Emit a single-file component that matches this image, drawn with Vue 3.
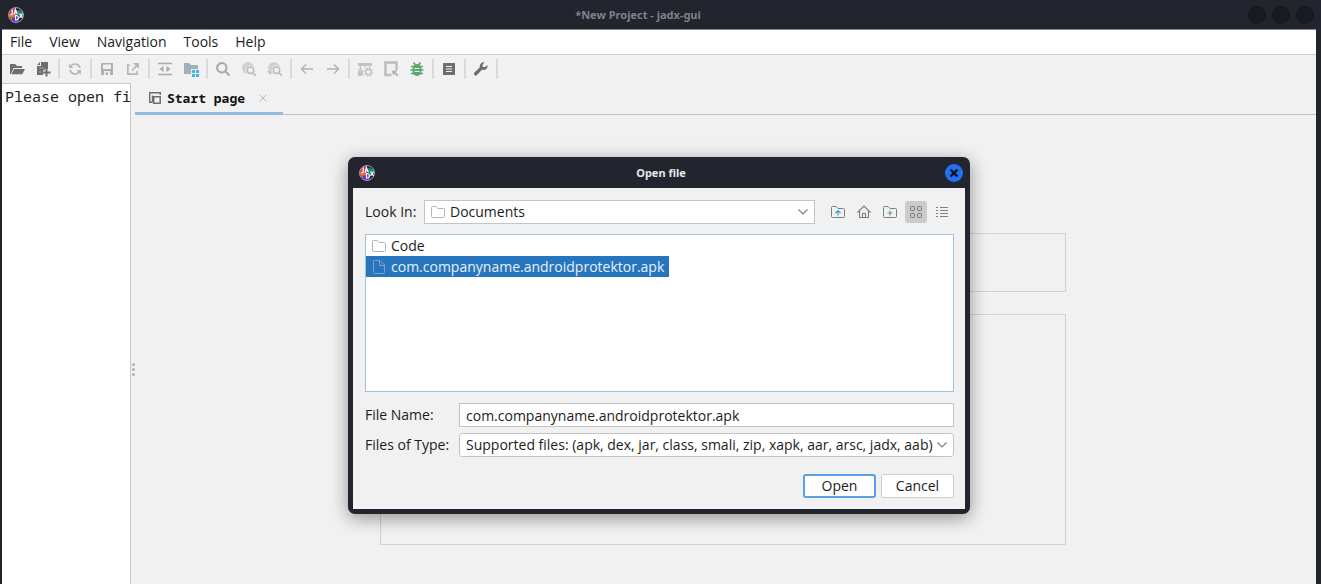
<script setup>
import { ref } from 'vue'

const menus = ['File', 'View', 'Navigation', 'Tools', 'Help']

const toolGroups = [
  [
    { id: 'open', label: 'Open file' },
    { id: 'add', label: 'Add files' },
  ],
  [{ id: 'reload', label: 'Reload files' }],
  [
    { id: 'save', label: 'Save all' },
    { id: 'export', label: 'Export project' },
  ],
  [
    { id: 'sync', label: 'Sync with editor' },
    { id: 'flat', label: 'Flatten packages' },
  ],
  [
    { id: 'search', label: 'Text search' },
    { id: 'find', label: 'Class search' },
    { id: 'find2', label: 'Comment search' },
  ],
  [
    { id: 'back', label: 'Back' },
    { id: 'forward', label: 'Forward' },
  ],
  [
    { id: 'deobf', label: 'Deobfuscation' },
    { id: 'quark', label: 'Quark engine' },
    { id: 'bug', label: 'Debugger' },
  ],
  [{ id: 'log', label: 'Log viewer' }],
  [{ id: 'prefs', label: 'Preferences' }],
]

const fileName = ref('com.companyname.androidprotektor.apk')
</script>

<template>
  <div class="window">
    <svg class="defs" width="0" height="0" aria-hidden="true">
      <defs>
        <clipPath id="logo-clip"><circle cx="8" cy="8" r="7.4" /></clipPath>
        <symbol id="logo" viewBox="0 0 16 16">
          <g clip-path="url(#logo-clip)">
            <rect width="16" height="16" fill="#2b2530" />
            <path d="M0 0h8v8H0z" fill="#c2386b" />
            <path d="M8 3l8 1v7l-5-1z" fill="#178a80" />
            <path d="M0 8l8-1 1 4-4 4z" fill="#ee6a32" />
            <path d="M4 11l5-2 3 7H4z" fill="#5b35cf" />
            <path d="M4.200 2.500v4q0 1.500-2 1M6 7.500l1.400-5 2 5M6.500 6h2.500" class="mark" />
            <path d="M7.500 8.500v4.500h1q1.800 0 1.800-2.200t-1.800-2.300zM11.500 6.500l3 4.500M14.500 6.500l-3 4.500" class="mark" />
          </g>
          <circle cx="8" cy="8" r="7.5" fill="none" stroke="#b9b9bd" stroke-width="0.8" />
        </symbol>
      </defs>
    </svg>

    <header class="titlebar">
      <svg class="logo" aria-hidden="true"><use href="#logo" /></svg>
      <h1>*New Project - jadx-gui</h1>
      <div class="winbtns">
        <button aria-label="Minimize"></button>
        <button aria-label="Maximize"></button>
        <button aria-label="Close"></button>
      </div>
    </header>

    <div class="frame">
      <nav class="menubar">
        <button v-for="m in menus" :key="m">{{ m }}</button>
      </nav>

      <div class="toolbar" role="toolbar">
        <div v-for="(group, i) in toolGroups" :key="i" class="group">
          <button v-for="t in group" :key="t.id" :aria-label="t.label">
            <svg width="16" height="16" viewBox="0 0 16 16" fill="none" aria-hidden="true">
              <path v-if="t.id === 'open'" d="M1 13V3h5l2 2h5v2H4.500L2 13zM2.500 13.200L5 8h11l-2.700 5.200z" fill="#6e6e6e" />
              <template v-else-if="t.id === 'add'">
                <path d="M6 1h7v8h-3v2H8v3H2V5h4z" fill="#6e6e6e" />
                <path d="M2 4l3-3v3z" fill="#6e6e6e" />
                <path d="M4 7h5M4 11h3" stroke="#a5a5a5" />
                <path d="M11.500 8v7M8 11.500h7" stroke="#f1f1f1" stroke-width="4" />
                <path d="M11.500 8v7.500M7.500 11.500h8" stroke="#6e6e6e" stroke-width="2" />
              </template>
              <g v-else-if="t.id === 'reload'" stroke="#b7b7b7" stroke-width="1.700">
                <path d="M13 7A5.200 5.200 0 0 0 3.500 5.500M3 9a5.200 5.200 0 0 0 9.500 1.500" />
                <path d="M2 2.500V7h4.500zM14 13.500V9H9.500z" fill="#b7b7b7" stroke="none" />
              </g>
              <path v-else-if="t.id === 'save'" fill-rule="evenodd" d="M2 2h12v12H2zM4 3.500V8h8V3.500zM5 10v4h1.500v-2.500H9V14h2v-4z" fill="#b0b0b0" />
              <g v-else-if="t.id === 'export'" stroke="#b7b7b7" stroke-width="1.700">
                <path d="M5 4H2.800v9.200H12V10M7 9.500l5-5" />
                <path d="M8 2h6v6z" fill="#b7b7b7" stroke="none" />
              </g>
              <template v-else-if="t.id === 'sync'">
                <path d="M1 2.500h14M1 13.500h14" stroke="#aaa" stroke-width="1.600" />
                <path d="M6.500 5v6L2.500 8zM9.500 5v6l4-3z" fill="#aaa" />
              </template>
              <template v-else-if="t.id === 'flat'">
                <path d="M1 2h5l2 2h7v4H8v5H1z" fill="#a4b0b9" />
                <path d="M9 9h3v3H9zM13 9h3v3h-3zM9 13h3v3H9zM13 13h3v3h-3z" fill="#3fb4e8" />
              </template>
              <path v-else-if="t.id === 'search'" d="M10.400 10.400L14.500 14.500M11.500 6.800a4.700 4.700 0 1 1-9.400 0a4.700 4.700 0 0 1 9.400 0z" stroke="#a6a6a6" stroke-width="2" />
              <template v-else-if="t.id === 'find' || t.id === 'find2'">
                <circle cx="7" cy="7" r="6" fill="#d1d1d1" />
                <circle cx="9.500" cy="9.300" r="4.800" fill="#f1f1f1" />
                <circle cx="9.500" cy="9.300" r="3.200" stroke="#bcbcbc" stroke-width="1.500" />
                <path d="M11.800 11.600L15 14.800" stroke="#bcbcbc" stroke-width="1.600" />
                <path v-if="t.id === 'find2'" d="M1 10A6 6 0 0 0 4 13" stroke="#bcbcbc" stroke-width="1.500" />
              </template>
              <path v-else-if="t.id === 'back'" d="M14 8H3M7 3.500L2.500 8 7 12.500" stroke="#b4b4b4" stroke-width="1.500" />
              <path v-else-if="t.id === 'forward'" d="M2 8h11M9 3.500L13.500 8 9 12.500" stroke="#b4b4b4" stroke-width="1.500" />
              <template v-else-if="t.id === 'deobf'">
                <path d="M1 2h14v3H1z" fill="#c3c3c3" />
                <path d="M3.500 5v4M8 5v2M12.500 5v2" stroke="#c3c3c3" />
                <path d="M1 9.500h5V15H1z" fill="#c3c3c3" />
                <path d="M2 10V8.500a1.500 1.500 0 0 1 3 0V10" stroke="#c3c3c3" />
                <circle cx="11.500" cy="11" r="4" stroke="#c3c3c3" stroke-width="1.500" stroke-dasharray="1.600 1.541" />
                <circle cx="11.500" cy="11" r="2.700" stroke="#c3c3c3" stroke-width="1.500" />
              </template>
              <template v-else-if="t.id === 'quark'">
                <path d="M8.500 14H2.500V1.500h11v8" stroke="#bcbcbc" stroke-width="2.400" />
                <path d="M8.500 9.500h6l-1.700 1.700 2.700 3-1.300 1.300-2.800-2.800-1.200 1.500z" fill="#b4b4b4" />
              </template>
              <template v-else-if="t.id === 'bug'">
                <path d="M4.500 1.500L6.500 4M11.500 1.500L9.500 4M2 5.500h12M1.500 9h13M2 12.500h12" stroke="#59a869" stroke-width="1.700" />
                <ellipse cx="8" cy="9" rx="4.600" ry="6" fill="#59a869" />
                <path d="M5.500 7.500h5M5.500 10.500h5" stroke="#f1f1f1" stroke-width="1.200" />
              </template>
              <template v-else-if="t.id === 'log'">
                <path d="M2 2h12v12H2z" fill="#6e6e6e" />
                <path d="M5 5.500h6M5 8h6M5 10.500h6" stroke="#f1f1f1" />
              </template>
              <path v-else d="M14.600 4.300A4 4 0 0 1 9.200 8.600L4 14a1.700 1.700 0 0 1-2.500-2.500L6.900 6.200A4 4 0 0 1 11.700 1.300L9.600 3.500v2.400H12z" fill="#6e6e6e" />
            </svg>
          </button>
        </div>
      </div>

      <div class="split">
        <aside class="tree">Please open fi</aside>
        <div class="divider" aria-hidden="true"><i></i><i></i><i></i></div>
        <main>
          <div class="tabs">
            <div class="tab">
              <svg width="12" height="12" viewBox="0 0 12 12" fill="none" aria-hidden="true">
                <path d="M3 10.300H.7V.7h10.600V3M3.500 10.500v-7" stroke="#6e6e6e" stroke-width="1.400" />
                <path d="M4.700 4.700h6.500v6.500H4.700z" stroke="#6e6e6e" stroke-width="1.500" />
              </svg>
              <span>Start page</span>
              <button aria-label="Close tab">
                <svg width="8" height="8" viewBox="0 0 8 8" aria-hidden="true"><path d="M.5.5l7 7M7.500.5l-7 7" stroke="#bcbcbc" /></svg>
              </button>
            </div>
          </div>
          <div class="start">
            <section class="box actions"></section>
            <section class="box recent"></section>
          </div>
        </main>
      </div>
    </div>

    <div class="dialog" role="dialog" aria-labelledby="dialog-title">
      <div class="dialog-title">
        <svg class="logo" aria-hidden="true"><use href="#logo" /></svg>
        <h2 id="dialog-title">Open file</h2>
        <button class="close" aria-label="Close dialog">
          <svg width="10" height="10" viewBox="0 0 10 10" aria-hidden="true"><path d="M1.500 1.500l7 7M8.500 1.500l-7 7" stroke="#101218" stroke-width="2.400" /></svg>
        </button>
      </div>
      <form class="dialog-body" @submit.prevent>
        <div class="look">
          <label for="look">Look In:</label>
          <div class="combo square">
            <svg class="lead" width="16" height="16" viewBox="0 0 16 16" fill="none" aria-hidden="true">
              <path d="M1.500 12.500v-9q0-1 1-1H6l2 2h5.500q1 0 1 1v7q0 1-1 1h-11q-1 0-1-1z" stroke="#adb5bd" />
            </svg>
            <select id="look" class="with-icon"><option>Documents</option></select>
            <svg class="arrow" width="10" height="6" viewBox="0 0 10 6" fill="none" aria-hidden="true"><path d="M.5.5L5 5 9.500.5" stroke="#7d7d7d" stroke-width="1.200" /></svg>
          </div>
          <div class="views">
            <button type="button" aria-label="Up one level">
              <svg width="16" height="16" viewBox="0 0 16 16" fill="none" aria-hidden="true">
                <path d="M1.500 12.500v-9q0-1 1-1H6l2 2h5.500q1 0 1 1v7q0 1-1 1h-11q-1 0-1-1z" stroke="#7d7d7d" />
                <path d="M8 11.500V6.500M5.500 9L8 6.500 10.500 9" stroke="#389fd6" stroke-width="1.200" />
              </svg>
            </button>
            <button type="button" aria-label="Home">
              <svg width="16" height="16" viewBox="0 0 16 16" fill="none" aria-hidden="true">
                <path d="M1.500 8.500L8 2l6.500 6.500M3.500 7v6.500h9V7M6.500 13.500v-4h3v4" stroke="#7d7d7d" stroke-width="1.100" />
              </svg>
            </button>
            <button type="button" aria-label="New folder">
              <svg width="16" height="16" viewBox="0 0 16 16" fill="none" aria-hidden="true">
                <path d="M1.500 12.500v-9q0-1 1-1H6l2 2h5.500q1 0 1 1v7q0 1-1 1h-11q-1 0-1-1z" stroke="#7d7d7d" />
                <path d="M8 6.500v5M5.500 9h5" stroke="#59a869" stroke-width="1.200" />
              </svg>
            </button>
            <button type="button" class="on" aria-label="List" aria-pressed="true">
              <svg width="16" height="16" viewBox="0 0 16 16" fill="none" stroke="#6e6e6e" aria-hidden="true">
                <rect x="2.500" y="2.500" width="4" height="4" rx="1" /><rect x="9.500" y="2.500" width="4" height="4" rx="1" />
                <rect x="2.500" y="9.500" width="4" height="4" rx="1" /><rect x="9.500" y="9.500" width="4" height="4" rx="1" />
              </svg>
            </button>
            <button type="button" aria-label="Details">
              <svg width="16" height="16" viewBox="0 0 16 16" fill="none" aria-hidden="true">
                <path d="M2 3.500h2M2 6.500h2M2 9.500h2M2 12.500h2M6 3.500h8M6 6.500h8M6 9.500h8M6 12.500h8" stroke="#808080" />
              </svg>
            </button>
          </div>
        </div>

        <ul class="files">
          <li>
            <svg width="16" height="16" viewBox="0 0 16 16" fill="none" aria-hidden="true">
              <path d="M1.500 12.500v-9q0-1 1-1H6l2 2h5.500q1 0 1 1v7q0 1-1 1h-11q-1 0-1-1z" stroke="#adb5bd" />
            </svg>Code
          </li>
          <li class="selected">
            <svg width="16" height="16" viewBox="0 0 16 16" fill="none" aria-hidden="true">
              <path d="M2.500 13.500v-11q0-1 1-1H9l4.500 4.500v7.500q0 1-1 1h-9q-1 0-1-1zM8.500 1.500v5h5" stroke="#8a9fb3" />
            </svg>com.companyname.androidprotektor.apk
          </li>
        </ul>

        <div class="field">
          <label for="name">File Name:</label>
          <input id="name" v-model="fileName" type="text" />
        </div>
        <div class="field">
          <label for="type">Files of Type:</label>
          <div class="combo">
            <select id="type"><option>Supported files: (apk, dex, jar, class, smali, zip, xapk, aar, arsc, jadx, aab)</option></select>
            <svg class="arrow" width="10" height="6" viewBox="0 0 10 6" fill="none" aria-hidden="true"><path d="M.5.5L5 5 9.500.5" stroke="#7d7d7d" stroke-width="1.200" /></svg>
          </div>
        </div>

        <div class="buttons">
          <button type="submit" class="primary">Open</button>
          <button type="button">Cancel</button>
        </div>
      </form>
    </div>
  </div>
</template>

<style>
body {
  background: #23252e;
}
</style>

<style scoped>
* {
  box-sizing: border-box;
}
.window {
  position: relative;
  display: flex;
  flex-direction: column;
  min-height: 100vh;
  background: #23252e;
  color: #1c1c1c;
  font: 14px/20px "Open Sans", "Noto Sans", sans-serif;
  overflow: hidden;
}
button,
input,
select {
  margin: 0;
  padding: 0;
  border: 0;
  background: none;
  color: inherit;
  font: inherit;
}
svg {
  display: block;
  flex: none;
}
.defs {
  position: absolute;
}
.mark {
  fill: none;
  stroke: #fff;
  stroke-width: 1.2;
}
.logo {
  width: 16px;
  height: 16px;
}
.titlebar {
  display: flex;
  align-items: center;
  height: 29px;
  padding: 0 7px 0 8px;
}
h1,
h2 {
  margin: 0;
  font: bold 11px/16px "Noto Sans", sans-serif;
}
h1 {
  flex: 1;
  padding-left: 4px;
  color: #7f8187;
  text-align: center;
}
.winbtns {
  display: flex;
  gap: 6px;
}
.winbtns button {
  width: 18px;
  height: 18px;
  border: 1px solid #14161b;
  border-radius: 50%;
  background: #191b20;
}
.frame {
  flex: 1;
  display: flex;
  flex-direction: column;
  margin: 0 5px 0 2px;
  border-top: 1px solid #8a8b90;
  background: #f1f1f1;
}
.menubar {
  display: flex;
  gap: 17px;
  height: 25px;
  padding: 0 8px;
  border-bottom: 1px solid #cdcdcd;
  background: #fff;
}
.toolbar {
  display: flex;
  height: 28px;
  padding: 0 2px;
}
.group {
  display: flex;
  align-items: center;
}
.group::after {
  content: "";
  width: 2px;
  height: 20px;
  margin: 0 2px;
  background: #d9d9d9;
}
.group button {
  padding: 5px;
}
.split {
  flex: 1;
  display: flex;
}
.tree {
  width: 129px;
  padding: 2px 0 0 3px;
  border-top: 1px solid #cdcdcd;
  border-right: 1px solid #c6c6c6;
  background: #fff;
  color: #222;
  font: 15px/20px "Noto Sans Mono", "DejaVu Sans Mono", monospace;
  white-space: nowrap;
}
.divider {
  display: flex;
  flex-direction: column;
  align-items: center;
  justify-content: center;
  gap: 2px;
  width: 4px;
  height: 572px;
  margin-bottom: -72px;
}
.divider i {
  width: 3px;
  height: 3px;
  border-radius: 50%;
  background: #b0b0b0;
}
main {
  flex: 1;
  min-width: 0;
}
.tabs {
  display: flex;
  height: 32px;
  border-bottom: 1px solid #c2c2c2;
}
.tab {
  display: flex;
  align-items: center;
  gap: 6px;
  height: 32px;
  padding: 0 16px 0 14px;
  border-bottom: 3px solid #94bbdf;
  color: #111;
  font: bold 13px/20px "Noto Sans Mono", "DejaVu Sans Mono", monospace;
}
.tab button {
  padding: 4px 0 4px 8px;
}
.start {
  display: flex;
  flex-direction: column;
  align-items: center;
  gap: 22px;
  padding: 118px 5px 39px 0;
}
.box {
  width: 58.3%;
  border: 1px solid #d2d2d2;
}
.actions {
  height: 59px;
}
.recent {
  height: 231px;
}
.dialog {
  position: absolute;
  top: 157px;
  left: 348px;
  width: 622px;
  padding: 0 5px 5px;
  border-radius: 7px;
  background: #23252e;
  box-shadow: 0 4px 18px rgba(0, 0, 0, 0.4);
}
.dialog-title {
  display: grid;
  grid-template-columns: 1fr auto 1fr;
  align-items: center;
  height: 31px;
  padding: 0 2px 0 6px;
}
h2 {
  color: #e6e7ea;
}
.close {
  display: flex;
  align-items: center;
  justify-content: center;
  justify-self: end;
  width: 18px;
  height: 18px;
  border-radius: 50%;
  background: #2370f4;
}
.dialog-body {
  padding: 12px 11px 11px 12px;
  background: #f1f1f1;
}
.look {
  display: flex;
  align-items: center;
  height: 24px;
}
.look label {
  width: 59px;
}
.combo {
  position: relative;
  flex: 1;
  min-width: 0;
  height: 24px;
}
.combo select,
.field input {
  width: 100%;
  height: 24px;
  padding: 0 6px;
  border: 1px solid #c4c4c4;
  background: #fff;
}
.combo select {
  appearance: none;
  border-radius: 3px;
}
.combo.square select {
  border-radius: 0;
}
.combo select.with-icon {
  padding-left: 25px;
}
.lead {
  position: absolute;
  top: 4px;
  left: 6px;
}
.arrow {
  position: absolute;
  top: 9px;
  right: 7px;
}
.views {
  display: flex;
  gap: 4px;
  margin: 0 1px 0 12px;
}
.views button {
  padding: 3px;
  border-radius: 3px;
}
.views .on {
  background: #cbcbcb;
}
.files {
  display: flex;
  flex-direction: column;
  align-items: flex-start;
  height: 158px;
  margin: 10px 0 11px;
  padding: 0;
  border: 1px solid #a3c0dd;
  background: #fff;
  list-style: none;
}
.files li {
  display: flex;
  align-items: center;
  gap: 4px;
  height: 21px;
  padding: 0 5px;
}
.files .selected {
  background: #2675bf;
  color: #e9f1f9;
}
.field {
  display: flex;
  align-items: center;
  margin-bottom: 6px;
}
.field label {
  width: 94px;
}
.field input {
  flex: 1;
  min-width: 0;
}
.buttons {
  display: flex;
  justify-content: flex-end;
  gap: 5px;
  padding-top: 11px;
}
.buttons button {
  width: 73px;
  height: 24px;
  border: 1px solid #cdcdcd;
  border-radius: 3px;
  background: #fff;
}
.buttons .primary {
  border: 2px solid #59a0e6;
}
</style>
